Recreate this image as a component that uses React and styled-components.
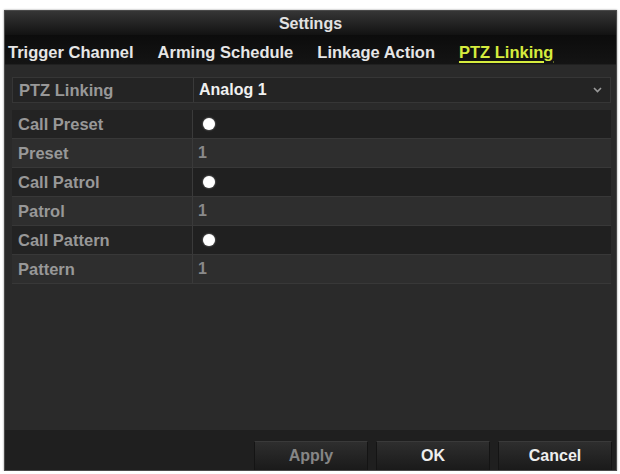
import React from "react";
import styled, { createGlobalStyle } from "styled-components";

const Global = createGlobalStyle`
  html, body { margin: 0; padding: 0; background: #ffffff; }
  body { font-family: "Liberation Sans", Arial, sans-serif; }
`;

const Page = styled.div`
  padding: 10px 0 0 4px;
`;

const Window = styled.div`
  width: 611px;
  height: 459px;
  border: 1px solid #4a4a4a;
  background: #2a2a2a;
  display: flex;
  flex-direction: column;
  box-shadow: 0 0 2px rgba(0, 0, 0, 0.4);
`;

const TitleBar = styled.div`
  height: 24px;
  flex: none;
  display: flex;
  align-items: center;
  justify-content: center;
  padding-top: 1px;
  box-sizing: border-box;
  background: linear-gradient(#363636, #121212);
  color: #e2e2e2;
  font-size: 16px;
  font-weight: 700;
`;

const Tabs = styled.div`
  height: 30px;
  flex: none;
  display: flex;
  align-items: center;
  gap: 24px;
  padding: 5px 0 0 3px;
  background: linear-gradient(#0c0c0c, #141414);
  border-bottom: 1px solid #202020;
  box-sizing: border-box;
`;

const Tab = styled.span`
  font-size: 16.5px;
  font-weight: 700;
  color: ${(p) => (p.$active ? "#d6ec3e" : "#e6e6e6")};
  text-decoration: ${(p) => (p.$active ? "underline" : "none")};
  text-underline-offset: 3px;
  text-decoration-thickness: 2px;
  white-space: nowrap;
`;

const Content = styled.div`
  flex: 1;
  padding: 12px 5px 0 7px;
  background: #2a2a2a;
`;

const SelectRow = styled.div`
  height: 26px;
  display: grid;
  grid-template-columns: 181px 1fr;
  box-sizing: border-box;
  border: 1px solid #363636;
  background: #242424;
  margin-bottom: 7px;
`;

const Table = styled.div`
  display: flex;
  flex-direction: column;
`;

const Row = styled.div`
  height: 29px;
  display: grid;
  grid-template-columns: 181px 1fr;
  box-sizing: border-box;
  border-bottom: 1px solid #383838;
  background: ${(p) => (p.$dark ? "#202020" : "#2e2e2e")};
`;

const Label = styled.div`
  display: flex;
  align-items: center;
  padding-left: 6px;
  font-size: 16.5px;
  font-weight: 700;
  color: #989898;
  border-right: 1px solid #3a3a3a;
  background: ${(p) => (p.$dark ? "#232323" : "transparent")};
`;

const Value = styled.div`
  display: flex;
  align-items: center;
  padding-left: ${(p) => (p.$pad ? p.$pad : 5)}px;
  padding-right: 8px;
  font-size: 16px;
  font-weight: 700;
  color: ${(p) => (p.$bright ? "#f0f0f0" : "#8a8a8a")};
  justify-content: space-between;
`;

const Dot = styled.span`
  width: 12px;
  height: 12px;
  border-radius: 50%;
  background: #ffffff;
  box-shadow: 0 0 2px rgba(255, 255, 255, 0.6);
`;

const Footer = styled.div`
  height: 40px;
  flex: none;
  background: #1f1f1f;
  display: flex;
  justify-content: flex-end;
  align-items: flex-end;
  gap: 8px;
  padding-right: 4px;
`;

const Button = styled.div`
  width: 114px;
  height: 29px;
  box-sizing: border-box;
  border: 1px solid #141414;
  border-bottom: none;
  border-top-color: #3a3a3a;
  background: linear-gradient(#2e2e2e, #1a1a1a);
  display: flex;
  align-items: center;
  justify-content: center;
  font-size: 16px;
  font-weight: 700;
  color: ${(p) => (p.$disabled ? "#868686" : "#eeeeee")};
`;

const Chevron = () => (
  <svg width="9" height="6" viewBox="0 0 9 6">
    <path d="M1 1 L4.5 4.5 L8 1" fill="none" stroke="#9a9a9a" strokeWidth="1.6" />
  </svg>
);

const rows = [
  { label: "Call Preset", dot: true },
  { label: "Preset", value: "1" },
  { label: "Call Patrol", dot: true },
  { label: "Patrol", value: "1" },
  { label: "Call Pattern", dot: true },
  { label: "Pattern", value: "1" },
];

export default function App() {
  return (
    <>
      <Global />
      <Page>
        <Window>
          <TitleBar>Settings</TitleBar>
          <Tabs>
            <Tab>Trigger Channel</Tab>
            <Tab>Arming Schedule</Tab>
            <Tab>Linkage Action</Tab>
            <Tab $active>PTZ Linking</Tab>
          </Tabs>
          <Content>
            <SelectRow>
              <Label>PTZ Linking</Label>
              <Value $bright>
                Analog 1
                <Chevron />
              </Value>
            </SelectRow>
            <Table>
              {rows.map((r) => (
                <Row key={r.label} $dark={r.dot}>
                  <Label $dark={r.dot}>{r.label}</Label>
                  <Value $pad={r.dot ? 10 : 5}>{r.dot ? <Dot /> : r.value}</Value>
                </Row>
              ))}
            </Table>
          </Content>
          <Footer>
            <Button $disabled>Apply</Button>
            <Button>OK</Button>
            <Button>Cancel</Button>
          </Footer>
        </Window>
      </Page>
    </>
  );
}
